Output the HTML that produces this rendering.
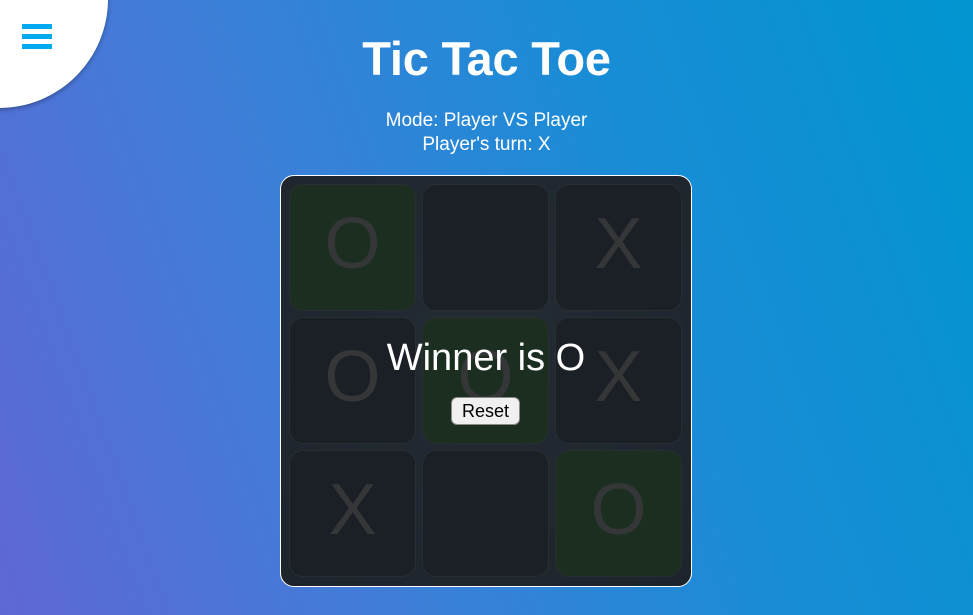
<!DOCTYPE html>
<html><head><style>
*{margin:0;padding:0;box-sizing:border-box}
body{width:973px;height:615px;overflow:hidden;font-family:"Liberation Sans",Arial,sans-serif;background:linear-gradient(70deg,#5f67d6 0%,#3d7fd8 35%,#1a8cd6 65%,#0095cf 100%);position:relative;color:#fff}
.corner{position:absolute;left:-110px;top:-110px;width:218px;height:218px;border-radius:50%;background:#fff;box-shadow:0 2px 4px rgba(0,0,0,.3)}
.bar{position:absolute;left:22px;width:30px;height:5px;background:#00aaee}
h1{position:absolute;top:31px;width:100%;text-align:center;font-size:47px;font-weight:bold;letter-spacing:-0.2px}
.sub{position:absolute;top:109px;width:100%;text-align:center;font-size:19px;line-height:24px}
.board{position:absolute;left:280px;top:175px;width:412px;height:412px;border:1px solid #fff;border-radius:14px;background:radial-gradient(circle at 50% 40%,#232b34,#1e242c)}
.c{position:absolute;width:127px;height:127px;border-radius:14px;background:#1b2026;border:1px solid #2a2e33;color:#343638;font-size:72px;text-align:center;line-height:118px}
.g{background:#1c2e20}
.win{position:absolute;left:280px;top:337px;width:412px;text-align:center;font-size:38px}
.btn{position:absolute;left:451px;top:397px;width:69px;height:28px;background:#f0f0f0;border:1px solid #888;border-radius:6px;color:#000;font-size:18px;text-align:center;line-height:26px}
</style></head><body>
<div class="corner"></div>
<div class="bar" style="top:24px"></div><div class="bar" style="top:34px"></div><div class="bar" style="top:44px"></div>
<h1>Tic Tac Toe</h1>
<div class="sub">Mode: Player VS Player<br>Player's turn: X</div>
<div class="board">
<div class="c g" style="left:8px;top:8px">O</div>
<div class="c" style="left:141px;top:8px"></div>
<div class="c" style="left:274px;top:8px">X</div>
<div class="c" style="left:8px;top:141px">O</div>
<div class="c g" style="left:141px;top:141px">O</div>
<div class="c" style="left:274px;top:141px">X</div>
<div class="c" style="left:8px;top:274px">X</div>
<div class="c" style="left:141px;top:274px"></div>
<div class="c g" style="left:274px;top:274px">O</div>
</div>
<div class="win">Winner is O</div>
<div class="btn">Reset</div>
</body></html>
